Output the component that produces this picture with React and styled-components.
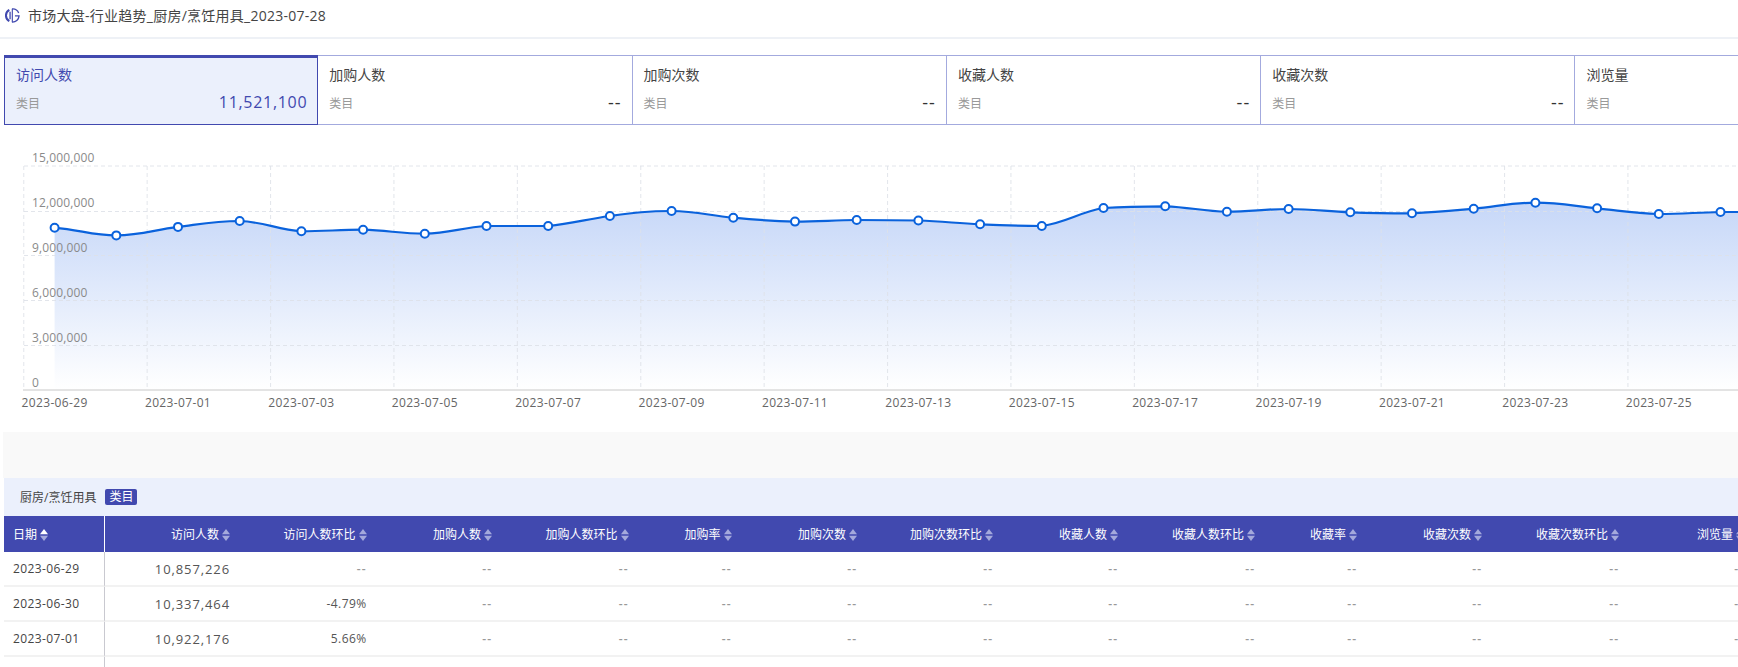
import React from "react";
import styled, { createGlobalStyle } from "styled-components";

const GlobalStyle = createGlobalStyle`
  html, body { margin: 0; padding: 0; background: #fff; overflow: hidden; }
  body { font-family: "Open Sans", "Noto Sans CJK SC", sans-serif; color: #333; }
`;

const Page = styled.div`
  width: 1738px;
  height: 667px;
  overflow: hidden;
  display: flex;
  flex-direction: column;
`;

const TitleBar = styled.header`
  flex: none;
  display: flex;
  align-items: center;
  height: 29px;
  padding: 1px 0 7px 5px;
  box-sizing: content-box;
  gap: 8px;
  border-bottom: 2px solid #eef1f6;
`;

const TitleText = styled.h1`
  margin: 0;
  font-size: 14px;
  font-weight: 400;
  line-height: 16px;
  letter-spacing: 0.25px;
  color: #444;
`;

const Tabs = styled.div`
  display: flex;
  flex: none;
  margin: 16px 0 0 4px;
  width: 1734px;
  height: 70px;
  overflow: hidden;
`;

const Tab = styled.div`
  flex: none;
  width: 314.3px;
  height: 70px;
  box-sizing: border-box;
  padding: ${(p) => (p.$active ? "7px" : "9px")} 10px 0 11px;
  border-top: ${(p) => (p.$active ? "3px solid #4149af" : "1px solid #a3aade")};
  border-bottom: 1px solid ${(p) => (p.$active ? "#4149af" : "#a3aade")};
  border-right: 1px solid ${(p) => (p.$active ? "#4149af" : "#a3aade")};
  border-left: ${(p) => (p.$active ? "1px solid #4149af" : "0")};
  background: ${(p) => (p.$active ? "#ebf0fc" : "#fff")};
`;

const TabLabel = styled.div`
  font-size: 14px;
  line-height: 20px;
  color: ${(p) => (p.$active ? "#4149af" : "#444")};
`;

const TabRow = styled.div`
  display: flex;
  justify-content: space-between;
  align-items: center;
  margin-top: 6px;
  height: 22px;
`;

const TabSub = styled.span`
  font-size: 12px;
  color: #999;
  padding-top: 2px;
`;

const TabValue = styled.span`
  font-size: ${(p) => (p.$active ? "16px" : "18px")};
  letter-spacing: ${(p) => (p.$active ? "0.7px" : "1px")};
  color: ${(p) => (p.$active ? "#4149af" : "#333")};
`;

const ChartWrap = styled.div`
  flex: none;
  margin-top: 6px;
  height: 301px;
`;

const ChartSvg = styled.svg`
  display: block;
`;

const Filler = styled.div`
  flex: none;
  height: 46px;
  margin-left: 3px;
  background: #f9f9f9;
`;

const Band = styled.div`
  flex: none;
  height: 38px;
  margin-left: 4px;
  background: #ebf0fc;
  display: flex;
  align-items: center;
  padding-left: 16px;
  gap: 9px;
  font-size: 12px;
  color: #444;
`;

const Tag = styled.span`
  background: #4149af;
  color: #fff;
  border-radius: 2px;
  font-size: 12px;
  line-height: 16px;
  padding: 0 4px;
`;

const Table = styled.table`
  margin-left: 4px;
  border-collapse: separate;
  border-spacing: 0;
  table-layout: fixed;
  width: 1746px;
  font-size: 12px;
`;

const Th = styled.th`
  height: 36px;
  padding: 0 6px 0 0;
  background: #4149af;
  color: #fff;
  font-weight: 400;
  font-size: 12px;
  text-align: right;
  white-space: nowrap;
  box-sizing: border-box;
  &:first-child {
    text-align: left;
    padding-left: 9px;
    border-right: 1px solid #fff;
  }
`;

const SortBox = styled.svg`
  display: inline-block;
  vertical-align: -2px;
  margin-left: 3px;
`;

const Td = styled.td`
  height: 35px;
  padding: 0 6px 0 0;
  box-sizing: border-box;
  text-align: right;
  white-space: nowrap;
  border-bottom: 2px solid #f2f2f2;
  font-size: ${(p) => (p.$big ? "13px" : "12px")};
  font-weight: ${(p) => (p.$empty ? 600 : 400)};
  color: ${(p) => (p.$empty ? "#999" : "#555")};
  letter-spacing: ${(p) => (p.$big ? "0.9px" : p.$empty ? "1px" : "0.4px")};
  &:first-child {
    text-align: left;
    padding-left: 9px;
    border-right: 1px solid #c9c9d0;
    color: #444;
  }
`;

const SortIcon = ({ active }) => (
  <SortBox width="8" height="12" viewBox="0 0 8 12">
    <path d="M4 0 L8 5.2 H0 Z" fill={active ? "#fff" : "#a4a9dc"} />
    <path d="M4 12 L8 6.8 H0 Z" fill="#a4a9dc" />
  </SortBox>
);

const Logo = () => (
  <svg width="15" height="15" viewBox="0 0 16 16" fill="none" stroke="#4149af">
    <path d="M4.6 1.9 A7 7 0 0 0 4.6 14.1" strokeWidth="2.2" />
    <path d="M7.4 1 A7 7 0 0 1 14.6 5.4" strokeWidth="1.4" />
    <path d="M7.4 15 A7 7 0 0 0 15 8.4 H10.6" strokeWidth="1.4" />
    <path d="M5.4 4 V12" strokeWidth="1.4" />
    <path d="M7.8 1 V15" strokeWidth="1.2" />
  </svg>
);

const tabs = [
  { label: "访问人数", value: "11,521,100", active: true },
  { label: "加购人数", value: "--" },
  { label: "加购次数", value: "--" },
  { label: "收藏人数", value: "--" },
  { label: "收藏次数", value: "--" },
  { label: "浏览量", value: "--" },
];

const columns = [
  ["日期", 101], ["访问人数", 131], ["访问人数环比", 136.5], ["加购人数", 125.5], ["加购人数环比", 136.5],
  ["加购率", 103], ["加购次数", 125.5], ["加购次数环比", 136], ["收藏人数", 125], ["收藏人数环比", 137],
  ["收藏率", 102], ["收藏次数", 125], ["收藏次数环比", 137], ["浏览量", 125],
];

const rows = [
  ["2023-06-29", "10,857,226", "--"],
  ["2023-06-30", "10,337,464", "-4.79%"],
  ["2023-07-01", "10,922,176", "5.66%"],
  ["", "", ""],
];

const ys = [226.8, 234.4, 225.9, 220, 230.3, 228.7, 232.7, 225, 225, 215, 210, 216.7, 220.6, 219, 219.5, 223.3, 225, 207, 205.3, 210.7, 208, 211.3, 212.3, 207.7, 201.7, 207.3, 213, 211, 211];
const X0 = 54.6;
const STEP = 61.7;
const BASE = 389;
const OFFSET = 130;
const pts = ys.map((y, i) => [X0 + i * STEP, y - OFFSET]);

function smoothPath(p) {
  let d = `M${p[0][0]} ${p[0][1]}`;
  const k = 0.22;
  for (let i = 0; i < p.length - 1; i++) {
    const a = p[i - 1] || p[i];
    const b = p[i];
    const c = p[i + 1];
    const e = p[i + 2] || c;
    const c1y = Math.min(Math.max(b[1] + (c[1] - a[1]) * k, Math.min(b[1], c[1])), Math.max(b[1], c[1]));
    const c2y = Math.min(Math.max(c[1] - (e[1] - b[1]) * k, Math.min(b[1], c[1])), Math.max(b[1], c[1]));
    d += ` C${b[0] + STEP * 0.4} ${c1y} ${c[0] - STEP * 0.4} ${c2y} ${c[0]} ${c[1]}`;
  }
  return d;
}

const linePath = smoothPath(pts);
const bottom = BASE - OFFSET;
const areaPath = `${linePath} L${pts[pts.length - 1][0]} ${bottom} L${X0} ${bottom} Z`;

const gridYs = [165, 210.5, 254.5, 299.5, 344.5].map((y) => y - OFFSET);
const yLabels = [
  ["15,000,000", 156], ["12,000,000", 201], ["9,000,000", 246], ["6,000,000", 291], ["3,000,000", 336], ["0", 381.5],
];
const gridXs = Array.from({ length: 15 }, (_, i) => X0 + STEP * (2 * i - 0.5));
const xLabels = Array.from({ length: 14 }, (_, i) => {
  const day = i * 2;
  const d = new Date(Date.UTC(2023, 5, 29 + day));
  return [d.toISOString().slice(0, 10), X0 + day * STEP];
});

const Chart = () => (
  <ChartSvg width="1738" height="301" viewBox="0 0 1738 301">
    <defs>
      <linearGradient id="areaFill" x1="0" y1="0" x2="0" y2="1">
        <stop offset="0" stopColor="#c6d7f8" />
        <stop offset="1" stopColor="#ffffff" />
      </linearGradient>
    </defs>
    <path d={areaPath} fill="url(#areaFill)" />
    {gridYs.map((y) => (
      <line key={y} x1="24" x2="1738" y1={y} y2={y} stroke="#dde0e8" strokeOpacity="0.85" strokeDasharray="4 3" />
    ))}
    {gridXs.map((x) => (
      <line key={x} x1={x} x2={x} y1={35} y2={bottom} stroke="#dde0e8" strokeOpacity="0.85" strokeDasharray="4 3" />
    ))}
    <line x1="23" x2="1738" y1={bottom} y2={bottom} stroke="#c8c8c8" />
    <path d={linePath} fill="none" stroke="#0a62dc" strokeWidth="2.2" />
    {pts.map(([x, y]) => (
      <circle key={x} cx={x} cy={y} r="4" fill="#fff" stroke="#0a62dc" strokeWidth="2" />
    ))}
    {yLabels.map(([t, y]) => (
      <text key={t} x="32" y={y - OFFSET} dominantBaseline="central" fontSize="12" fill="#8a8a8a" letterSpacing="0.15">{t}</text>
    ))}
    {xLabels.map(([t, x]) => (
      <text key={t} x={x} y={401.5 - OFFSET} textAnchor="middle" dominantBaseline="central" fontSize="12" fill="#666" letterSpacing="0.35">{t}</text>
    ))}
  </ChartSvg>
);

export default function App() {
  return (
    <Page>
      <GlobalStyle />
      <TitleBar>
        <Logo />
        <TitleText>市场大盘-行业趋势_厨房/烹饪用具_2023-07-28</TitleText>
      </TitleBar>
      <Tabs>
        {tabs.map((t) => (
          <Tab key={t.label} $active={t.active}>
            <TabLabel $active={t.active}>{t.label}</TabLabel>
            <TabRow>
              <TabSub>类目</TabSub>
              <TabValue $active={t.active}>{t.value}</TabValue>
            </TabRow>
          </Tab>
        ))}
      </Tabs>
      <ChartWrap>
        <Chart />
      </ChartWrap>
      <Filler />
      <Band>
        <span>厨房/烹饪用具</span>
        <Tag>类目</Tag>
      </Band>
      <Table>
        <colgroup>
          {columns.map(([name, w]) => (
            <col key={name} width={w} />
          ))}
        </colgroup>
        <thead>
          <tr>
            {columns.map(([name], i) => (
              <Th key={name}>
                {name}
                <SortIcon active={i === 0} />
              </Th>
            ))}
          </tr>
        </thead>
        <tbody>
          {rows.map((r, ri) => (
            <tr key={ri}>
              {columns.map(([name], i) => {
                const blank = r[0] === "";
                const v = blank ? "" : i < 3 ? r[i] : "--";
                return (
                  <Td key={name} $big={i === 1} $empty={v === "--"}>{v}</Td>
                );
              })}
            </tr>
          ))}
        </tbody>
      </Table>
    </Page>
  );
}
